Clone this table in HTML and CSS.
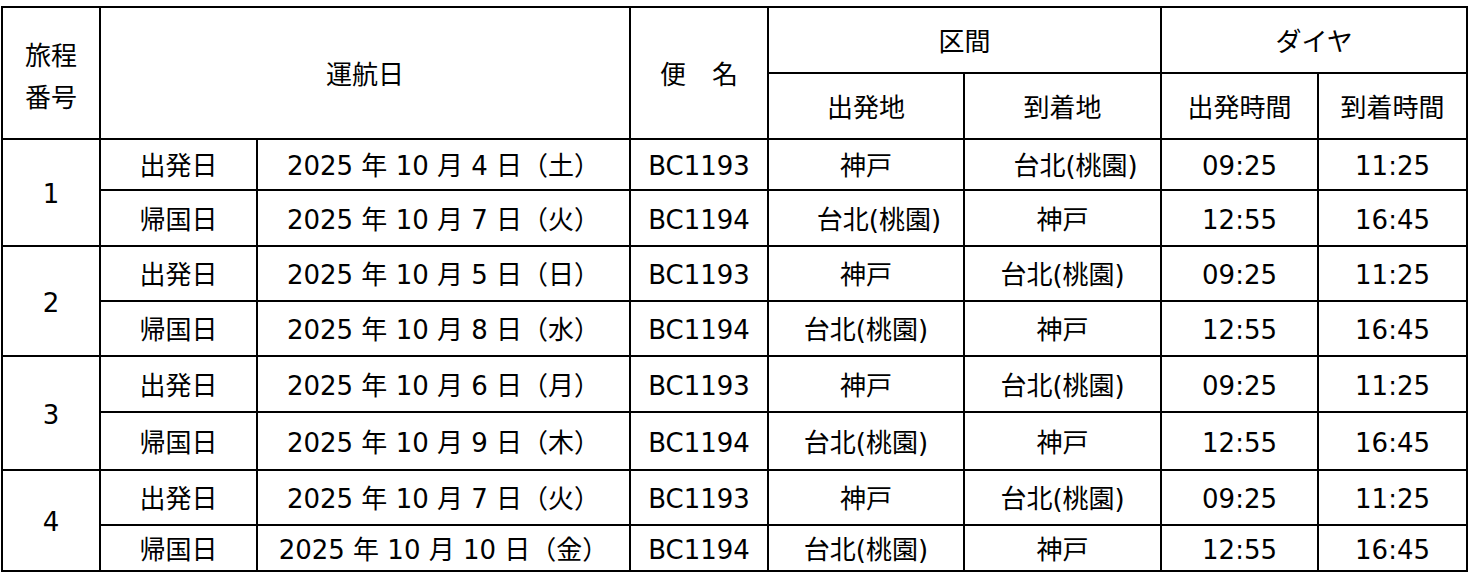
FILE: index.html
```html
<!DOCTYPE html>
<html lang="ja">
<head>
<meta charset="utf-8">
<link rel="stylesheet" href="styles.css">
</head>
<body>
<table class="schedule">
  <colgroup>
    <col class="c-no"><col class="c-kind"><col class="c-date"><col class="c-flight">
    <col class="c-from"><col class="c-to"><col class="c-dep"><col class="c-arr">
  </colgroup>
  <thead>
    <tr class="h1">
      <th rowspan="2" class="trip">旅程<br>番号</th>
      <th rowspan="2" colspan="2">運航日</th>
      <th rowspan="2">便　名</th>
      <th colspan="2">区間</th>
      <th colspan="2">ダイヤ</th>
    </tr>
    <tr class="h2">
      <th>出発地</th>
      <th>到着地</th>
      <th>出発時間</th>
      <th>到着時間</th>
    </tr>
  </thead>
  <tbody>
    <tr class="r1">
      <td rowspan="2">1</td><td>出発日</td><td>2025 年 10 月 4 日（土）</td><td>BC1193</td><td>神戸</td><td>　台北(桃園)</td><td>09:25</td><td>11:25</td>
    </tr>
    <tr class="r2">
      <td>帰国日</td><td>2025 年 10 月 7 日（火）</td><td>BC1194</td><td>　台北(桃園)</td><td>神戸</td><td>12:55</td><td>16:45</td>
    </tr>
    <tr class="r3">
      <td rowspan="2">2</td><td>出発日</td><td>2025 年 10 月 5 日（日）</td><td>BC1193</td><td>神戸</td><td>台北(桃園)</td><td>09:25</td><td>11:25</td>
    </tr>
    <tr class="r4">
      <td>帰国日</td><td>2025 年 10 月 8 日（水）</td><td>BC1194</td><td>台北(桃園)</td><td>神戸</td><td>12:55</td><td>16:45</td>
    </tr>
    <tr class="r5">
      <td rowspan="2">3</td><td>出発日</td><td>2025 年 10 月 6 日（月）</td><td>BC1193</td><td>神戸</td><td>台北(桃園)</td><td>09:25</td><td>11:25</td>
    </tr>
    <tr class="r6">
      <td>帰国日</td><td>2025 年 10 月 9 日（木）</td><td>BC1194</td><td>台北(桃園)</td><td>神戸</td><td>12:55</td><td>16:45</td>
    </tr>
    <tr class="r7">
      <td rowspan="2">4</td><td>出発日</td><td>2025 年 10 月 7 日（火）</td><td>BC1193</td><td>神戸</td><td>台北(桃園)</td><td>09:25</td><td>11:25</td>
    </tr>
    <tr class="r8">
      <td>帰国日</td><td>2025 年 10 月 10 日（金）</td><td>BC1194</td><td>台北(桃園)</td><td>神戸</td><td>12:55</td><td>16:45</td>
    </tr>
  </tbody>
</table>
</body>
</html>
```
FILE: styles.css
```css
html, body {
  margin: 0;
  padding: 0;
  background: #ffffff;
}
body {
  padding: 6px 0 0 1px;
  font-family: "DejaVu Sans", "Noto Sans CJK JP", sans-serif;
  font-size: 26px;
  color: #000000;
}
.schedule {
  border-collapse: collapse;
  table-layout: fixed;
  width: 1466px;
}
.schedule th,
.schedule td {
  border: 2px solid #000000;
  padding: 5px 0 0 0;
  text-align: center;
  vertical-align: middle;
  font-weight: normal;
  white-space: nowrap;
  line-height: 1.2;
}
.schedule .trip {
  line-height: 42px;
  padding-top: 8px;
}
.c-no { width: 98px; }
.c-kind { width: 157px; }
.c-date { width: 373px; }
.c-flight { width: 138px; }
.c-from { width: 196px; }
.c-to { width: 197px; }
.c-dep { width: 157px; }
.c-arr { width: 149px; }
.h1 { height: 66px; }
.h2 { height: 66px; }
.r1 { height: 51px; }
.r2 { height: 56px; }
.r3 { height: 55px; }
.r4 { height: 55px; }
.r5 { height: 56px; }
.r6 { height: 58px; }
.r7 { height: 55px; }
.r8 { height: 46px; }
```
